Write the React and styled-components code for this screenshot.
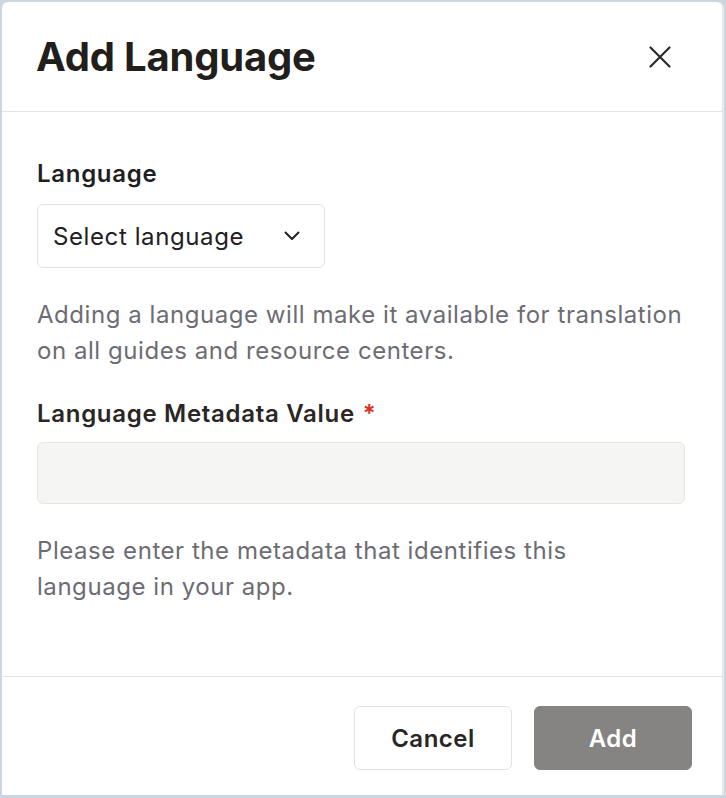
import React from "react";
import styled, { createGlobalStyle } from "styled-components";

const Global = createGlobalStyle`
  html, body { margin: 0; padding: 0; background: #cad7e1; }
  body { font-family: Inter, "Noto Sans", sans-serif; -webkit-font-smoothing: antialiased; }
  * { box-sizing: border-box; }
`;

const Page = styled.div`
  width: 726px;
  height: 798px;
  padding: 2px 4px 3px 2px;
`;

const Dialog = styled.div`
  width: 720px;
  height: 793px;
  background: #ffffff;
  border-radius: 6px 6px 0 0;
  box-shadow: 1px 0 0 #e4e4e4, 2px 0 0 #eeeeee;
  display: flex;
  flex-direction: column;
`;

const Header = styled.div`
  height: 110px;
  flex: none;
  display: flex;
  align-items: center;
  justify-content: space-between;
  padding: 0 44px 0 34px;
  border-bottom: 1px solid #e3e3e3;
`;

const Title = styled.h1`
  margin: 0;
  font-size: 40px;
  font-weight: 700;
  color: #221e1b;
  letter-spacing: -0.2px;
  line-height: 48px;
`;

const CloseButton = styled.button`
  width: 36px;
  height: 36px;
  border: none;
  background: none;
  padding: 0;
  display: flex;
  align-items: center;
  justify-content: center;
  cursor: pointer;
`;

const Body = styled.div`
  flex: 1;
  padding: 46px 36px 0 35px;
  display: flex;
  flex-direction: column;
  border-bottom: 1px solid #e3e3e3;
`;

const Label = styled.div`
  font-size: 24px;
  line-height: 32px;
  font-weight: 600;
  letter-spacing: 0.7px;
  color: ${(p) => p.$color || "#1f1f23"};
  margin-top: ${(p) => p.$mt || 0}px;
`;

const Required = styled.span`
  color: #d7321b;
  margin-left: 8px;
`;

const Select = styled.div`
  margin-top: ${(p) => p.$mt || 0}px;
  width: 288px;
  height: 64px;
  border: 1px solid #e2e2e2;
  border-radius: 6px;
  display: flex;
  align-items: center;
  justify-content: space-between;
  padding: 0 24px 0 15px;
  font-size: 24px;
  letter-spacing: 0.6px;
  color: #222024;
`;

const Help = styled.p`
  margin: ${(p) => p.$mt || 0}px 0 0 0;
  max-width: 646px;
  font-size: 24px;
  line-height: 36px;
  letter-spacing: 0.55px;
  color: #6d6c74;
  font-weight: 400;
`;

const Input = styled.input`
  margin-top: ${(p) => p.$mt || 0}px;
  width: 648px;
  height: 62px;
  background: #f5f5f3;
  border: 1px solid #e6e6e2;
  border-radius: 6px;
  font-family: inherit;
  font-size: 24px;
  padding: 0 15px;
  outline: none;
`;

const Footer = styled.div`
  flex: none;
  height: 118px;
  display: flex;
  justify-content: flex-end;
  align-items: flex-start;
  gap: 22px;
  padding: 29px 30px 0 0;
`;

const Button = styled.button`
  width: 158px;
  height: 64px;
  border-radius: 6px;
  font-family: inherit;
  font-size: 24px;
  font-weight: 600;
  letter-spacing: 0.5px;
  cursor: pointer;
  border: 1px solid ${(p) => (p.$primary ? "#858483" : "#e2e2e2")};
  background: ${(p) => (p.$primary ? "#858483" : "#ffffff")};
  color: ${(p) => (p.$primary ? "#ffffff" : "#2a2624")};
`;

export default function App() {
  return (
    <>
      <Global />
      <Page>
        <Dialog>
          <Header>
            <Title>Add Language</Title>
            <CloseButton aria-label="Close">
              <svg width="22" height="22" viewBox="0 0 22 22">
                <path d="M1.5 1.5 L20.5 20.5 M20.5 1.5 L1.5 20.5" stroke="#2b2b2b" strokeWidth="2.2" strokeLinecap="round" fill="none" />
              </svg>
            </CloseButton>
          </Header>
          <Body>
            <Label>Language</Label>
            <Select $mt={14}>
              <span>Select language</span>
              <svg width="16" height="10" viewBox="0 0 16 10">
                <polyline points="1.5,1.5 8,8 14.5,1.5" stroke="#222" strokeWidth="2" fill="none" strokeLinecap="round" strokeLinejoin="round" />
              </svg>
            </Select>
            <Help $mt={29}>
              Adding a language will make it available for translation on all guides and resource centers.
            </Help>
            <Label $mt={29} $color="#2b2624">
              Language Metadata Value<Required>*</Required>
            </Label>
            <Input $mt={12} />
            <Help $mt={29}>
              Please enter the metadata that identifies this language in your app.
            </Help>
          </Body>
          <Footer>
            <Button>Cancel</Button>
            <Button $primary>Add</Button>
          </Footer>
        </Dialog>
      </Page>
    </>
  );
}
